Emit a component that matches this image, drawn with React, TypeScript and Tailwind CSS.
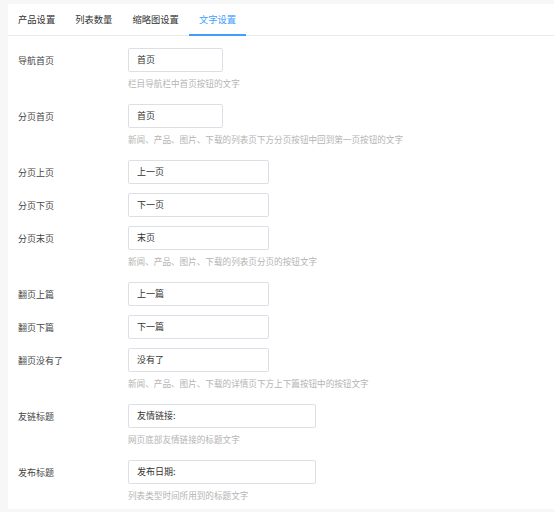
import { useState } from 'react';

const TABS = ['产品设置', '列表数量', '缩略图设置', '文字设置'];

type Row = { label: string; value: string; width: string; hint?: string };

const ROWS: Row[] = [
  { label: '导航首页', value: '首页', width: 'w-[95px]', hint: '栏目导航栏中首页按钮的文字' },
  { label: '分页首页', value: '首页', width: 'w-[95px]', hint: '新闻、产品、图片、下载的列表页下方分页按钮中回到第一页按钮的文字' },
  { label: '分页上页', value: '上一页', width: 'w-[141px]' },
  { label: '分页下页', value: '下一页', width: 'w-[141px]' },
  { label: '分页末页', value: '末页', width: 'w-[141px]', hint: '新闻、产品、图片、下载的列表页分页的按钮文字' },
  { label: '翻页上篇', value: '上一篇', width: 'w-[141px]' },
  { label: '翻页下篇', value: '下一篇', width: 'w-[141px]' },
  { label: '翻页没有了', value: '没有了', width: 'w-[141px]', hint: '新闻、产品、图片、下载的详情页下方上下篇按钮中的按钮文字' },
  { label: '友链标题', value: '友情链接:', width: 'w-[188px]', hint: '网页底部友情链接的标题文字' },
  { label: '发布标题', value: '发布日期:', width: 'w-[188px]', hint: '列表类型时间所用到的标题文字' },
];

export default function App() {
  const [active, setActive] = useState(3);

  return (
    <div
      className="w-[554px] h-[512px] overflow-hidden bg-[#f7f7f7] pt-[4px] pl-[8px]"
      style={{ fontFamily: '"Noto Sans CJK SC", "Noto Sans", sans-serif' }}
    >
      <div className="bg-white h-[505px] overflow-hidden">
        {/* 标签栏 */}
        <div className="flex h-[32px] border-b border-[#e8eaee]">
          {TABS.map((t, i) => (
            <button
              key={t}
              onClick={() => setActive(i)}
              className={
                i === active
                  ? 'px-[10px] text-[9.3px] leading-[30px] text-[#409eff] border-b-2 border-[#409eff] -mb-px'
                  : 'px-[10px] text-[9.3px] leading-[30px] text-[#333] border-b-2 border-transparent -mb-px'
              }
            >
              {t}
            </button>
          ))}
        </div>

        {/* 表单 */}
        <div className="flex flex-col gap-[9px] pt-[12px] pl-[10px]">
          {ROWS.map((r) => (
            <div key={r.label} className="flex">
              <div className="w-[110px] h-[24px] text-[9px] leading-[26px] text-[#444]">{r.label}</div>
              <div className="flex flex-col">
                <div
                  className={`${r.width} h-[24px] border border-[#dcdfe6] rounded-[2px] pl-[8px] text-[9px] leading-[22px] text-[#333]`}
                >
                  {r.value}
                </div>
                {r.hint && (
                  <div className="mt-[5px] mb-[5px] text-[8.6px] leading-[13px] text-[#b4b4b4] whitespace-nowrap">
                    {r.hint}
                  </div>
                )}
              </div>
            </div>
          ))}
        </div>
      </div>
    </div>
  );
}
